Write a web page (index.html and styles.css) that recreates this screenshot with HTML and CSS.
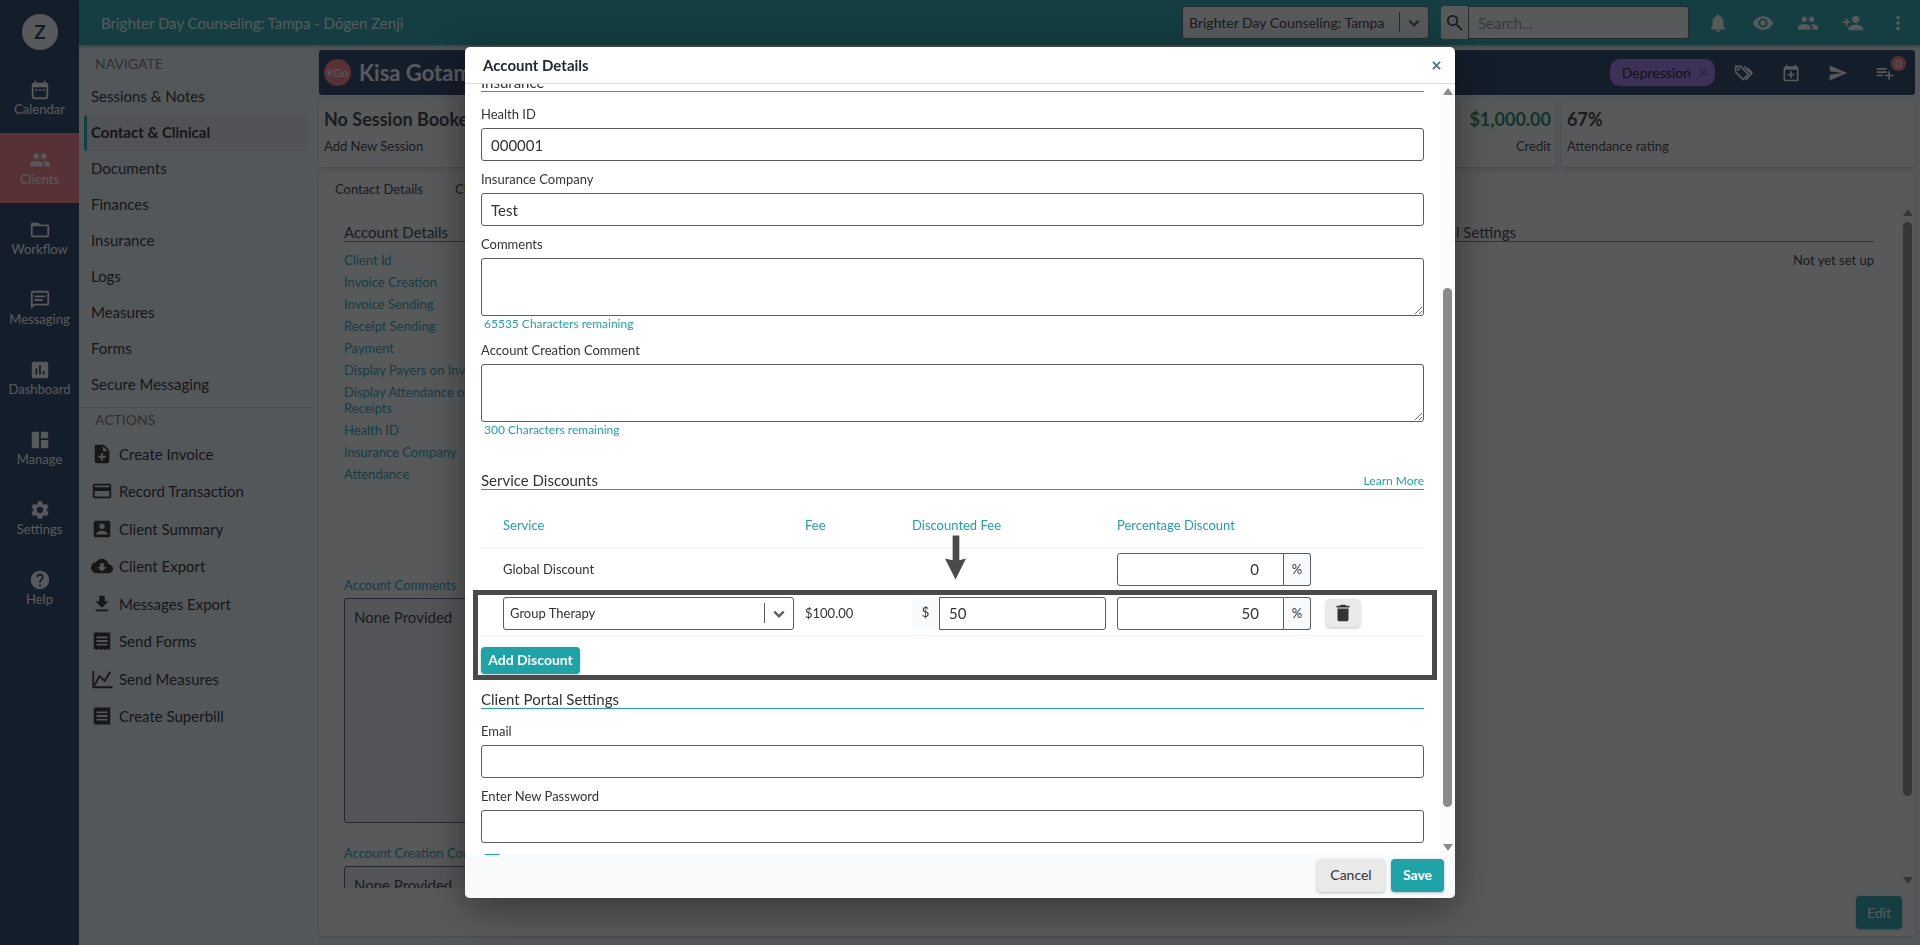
FILE: index.html
```
<!DOCTYPE html>
<html lang="en">
<head>
    <meta charset="UTF-8">
    <meta name="viewport" content="width=device-width, initial-scale=1.0">
    <title>Brighter Day Counseling - Account Details</title>
    <link rel="stylesheet" href="styles.css">
</head>
<body>
    <div class="app">
        <nav class="rail">
            <a class="logo" href="#">Z</a>
            <a class="rail-item" href="#">
                <svg class="icon" viewBox="0 0 24 24"><path d="M9 11H7v2h2v-2zm4 0h-2v2h2v-2zm4 0h-2v2h2v-2zm2-7h-1V2h-2v2H8V2H6v2H5c-1.11 0-1.99.9-1.99 2L3 20c0 1.1.89 2 2 2h14c1.1 0 2-.9 2-2V6c0-1.1-.9-2-2-2zm0 16H5V9h14v11z"/></svg>
                Calendar
            </a>
            <a class="rail-item active" href="#">
                <svg class="icon" viewBox="0 0 24 24"><path d="M16 11c1.66 0 2.99-1.34 2.99-3S17.66 5 16 5c-1.66 0-3 1.34-3 3s1.34 3 3 3zm-8 0c1.66 0 2.99-1.34 2.99-3S9.66 5 8 5C6.34 5 5 6.34 5 8s1.34 3 3 3zm0 2c-2.33 0-7 1.17-7 3.5V19h14v-2.5c0-2.33-4.67-3.5-7-3.5zm8 0c-.29 0-.62.02-.97.05 1.16.84 1.97 1.97 1.97 3.45V19h6v-2.5c0-2.33-4.67-3.5-7-3.5z"/></svg>
                Clients
            </a>
            <a class="rail-item" href="#">
                <svg class="icon" viewBox="0 0 24 24"><path d="M20 6h-8l-2-2H4c-1.1 0-1.99.9-1.99 2L2 18c0 1.1.9 2 2 2h16c1.1 0 2-.9 2-2V8c0-1.1-.9-2-2-2zm0 12H4V8h16v10z"/></svg>
                Workflow
            </a>
            <a class="rail-item" href="#">
                <svg class="icon" viewBox="0 0 24 24"><path d="M4 4h16v12H5.17L4 17.17V4m0-2c-1.1 0-1.99.9-1.99 2L2 22l4-4h14c1.1 0 2-.9 2-2V4c0-1.1-.9-2-2-2H4zm2 9h9v2H6v-2zm0-4h12v2H6V7z"/></svg>
                Messaging
            </a>
            <a class="rail-item" href="#">
                <svg class="icon" viewBox="0 0 24 24"><path d="M19 3H5c-1.1 0-2 .9-2 2v14c0 1.1.9 2 2 2h14c1.1 0 2-.9 2-2V5c0-1.1-.9-2-2-2zM9 17H7v-7h2v7zm4 0h-2V7h2v10zm4 0h-2v-4h2v4z"/></svg>
                Dashboard
            </a>
            <a class="rail-item" href="#">
                <svg class="icon" viewBox="0 0 24 24"><path d="M11 21H5c-1.1 0-2-.9-2-2V5c0-1.1.9-2 2-2h6v18zm2 0h6c1.1 0 2-.9 2-2v-7h-8v9zm8-11V5c0-1.1-.9-2-2-2h-6v7h8z"/></svg>
                Manage
            </a>
            <a class="rail-item" href="#">
                <svg class="icon" viewBox="0 0 24 24"><path d="M19.14 12.94c.04-.3.06-.61.06-.94 0-.32-.02-.64-.07-.94l2.03-1.58c.18-.14.23-.41.12-.61l-1.92-3.32c-.12-.22-.37-.29-.59-.22l-2.39.96c-.5-.38-1.03-.7-1.62-.94l-.36-2.54c-.04-.24-.24-.41-.48-.41h-3.84c-.24 0-.43.17-.47.41l-.36 2.54c-.59.24-1.13.57-1.62.94l-2.39-.96c-.22-.08-.47 0-.59.22L2.74 8.87c-.12.21-.08.47.12.61l2.03 1.58c-.05.3-.09.63-.09.94s.02.64.07.94l-2.03 1.58c-.18.14-.23.41-.12.61l1.92 3.32c.12.22.37.29.59.22l2.39-.96c.5.38 1.03.7 1.62.94l.36 2.54c.05.24.24.41.48.41h3.84c.24 0 .44-.17.47-.41l.36-2.54c.59-.24 1.13-.56 1.62-.94l2.39.96c.22.08.47 0 .59-.22l1.92-3.32c.12-.22.07-.47-.12-.61l-2.01-1.58zM12 15.6c-1.98 0-3.6-1.62-3.6-3.6s1.62-3.6 3.6-3.6 3.6 1.62 3.6 3.6-1.62 3.6-3.6 3.6z"/></svg>
                Settings
            </a>
            <a class="rail-item" href="#">
                <svg class="icon" viewBox="0 0 24 24"><path d="M12 2C6.48 2 2 6.48 2 12s4.48 10 10 10 10-4.48 10-10S17.52 2 12 2zm1 17h-2v-2h2v2zm2.07-7.75l-.9.92C13.45 12.9 13 13.5 13 15h-2v-.5c0-1.1.45-2.1 1.17-2.83l1.24-1.26c.37-.36.59-.86.59-1.41 0-1.1-.9-2-2-2s-2 .9-2 2H8c0-2.21 1.79-4 4-4s4 1.79 4 4c0 .88-.36 1.68-.93 2.25z"/></svg>
                Help
            </a>
        </nav>

        <div class="page">
            <header class="topbar">
                <h1 class="topbar-title">Brighter Day Counseling: Tampa - Dōgen Zenji</h1>
                <div class="select-wrap location">
                    <select aria-label="Location">
                        <option>Brighter Day Counseling: Tampa</option>
                    </select>
                    <svg class="chevron" viewBox="0 0 12 12"><path d="M2 4l4 4 4-4"/></svg>
                </div>
                <div class="search">
                    <button type="button" class="search-btn" aria-label="Search">
                        <svg viewBox="0 0 18 18"><circle cx="7" cy="7" r="5"/><path d="M11 11l6 6"/></svg>
                    </button>
                    <input type="text" placeholder="Search..." aria-label="Search clients">
                </div>
                <div class="topbar-icons">
                    <button type="button" class="icon-btn" aria-label="Notifications"><svg class="icon" viewBox="0 0 24 24"><path d="M12 22c1.1 0 2-.9 2-2h-4c0 1.1.89 2 2 2zm6-6v-5c0-3.07-1.64-5.64-4.5-6.32V4c0-.83-.67-1.5-1.5-1.5s-1.5.67-1.5 1.5v.68C7.63 5.36 6 7.92 6 11v5l-2 2v1h16v-1l-2-2z"/></svg></button>
                    <button type="button" class="icon-btn" aria-label="Recently viewed"><svg class="icon" viewBox="0 0 24 24"><path d="M12 4.5C7 4.5 2.73 7.61 1 12c1.73 4.39 6 7.5 11 7.5s9.27-3.11 11-7.5c-1.73-4.39-6-7.5-11-7.5zM12 17c-2.76 0-5-2.24-5-5s2.24-5 5-5 5 2.24 5 5-2.24 5-5 5zm0-8c-1.66 0-3 1.34-3 3s1.34 3 3 3 3-1.34 3-3-1.34-3-3-3z"/></svg></button>
                    <button type="button" class="icon-btn" aria-label="Clients"><svg class="icon" viewBox="0 0 24 24"><path d="M16 11c1.66 0 2.99-1.34 2.99-3S17.66 5 16 5c-1.66 0-3 1.34-3 3s1.34 3 3 3zm-8 0c1.66 0 2.99-1.34 2.99-3S9.66 5 8 5C6.34 5 5 6.34 5 8s1.34 3 3 3zm0 2c-2.33 0-7 1.17-7 3.5V19h14v-2.5c0-2.33-4.67-3.5-7-3.5zm8 0c-.29 0-.62.02-.97.05 1.16.84 1.97 1.97 1.97 3.45V19h6v-2.5c0-2.33-4.67-3.5-7-3.5z"/></svg></button>
                    <button type="button" class="icon-btn" aria-label="Add client"><svg class="icon" viewBox="0 0 24 24"><path d="M15 12c2.21 0 4-1.79 4-4s-1.79-4-4-4-4 1.79-4 4 1.79 4 4 4zm-9-2V7H4v3H1v2h3v3h2v-3h3v-2H6zm9 4c-2.67 0-8 1.34-8 4v2h16v-2c0-2.66-5.33-4-8-4z"/></svg></button>
                    <button type="button" class="icon-btn" aria-label="More"><svg class="icon" viewBox="0 0 24 24"><path d="M12 8c1.1 0 2-.9 2-2s-.9-2-2-2-2 .9-2 2 .9 2 2 2zm0 2c-1.1 0-2 .9-2 2s.9 2 2 2 2-.9 2-2-.9-2-2-2zm0 6c-1.1 0-2 .9-2 2s.9 2 2 2 2-.9 2-2-.9-2-2-2z"/></svg></button>
                </div>
            </header>

            <div class="content">
                <aside class="side">
                    <h2 class="side-title">NAVIGATE</h2>
                    <a class="side-link" href="#">Sessions &amp; Notes</a>
                    <a class="side-link active" href="#">Contact &amp; Clinical</a>
                    <a class="side-link" href="#">Documents</a>
                    <a class="side-link" href="#">Finances</a>
                    <a class="side-link" href="#">Insurance</a>
                    <a class="side-link" href="#">Logs</a>
                    <a class="side-link" href="#">Measures</a>
                    <a class="side-link" href="#">Forms</a>
                    <a class="side-link" href="#">Secure Messaging</a>
                    <h2 class="side-title actions-title">ACTIONS</h2>
                    <div class="actions">
                        <a class="action" href="#"><svg class="icon" viewBox="0 0 24 24"><path d="M14 2H6c-1.1 0-1.99.9-1.99 2L4 20c0 1.1.89 2 1.99 2H18c1.1 0 2-.9 2-2V8l-6-6zm2 14h-3v3h-2v-3H8v-2h3v-3h2v3h3v2zm-3-7V3.5L18.5 9H13z"/></svg>Create Invoice</a>
                        <a class="action" href="#"><svg class="icon" viewBox="0 0 24 24"><path d="M20 4H4c-1.11 0-1.99.89-1.99 2L2 18c0 1.11.89 2 2 2h16c1.11 0 2-.89 2-2V6c0-1.11-.89-2-2-2zm0 14H4v-6h16v6zm0-10H4V6h16v2z"/></svg>Record Transaction</a>
                        <a class="action" href="#"><svg class="icon" viewBox="0 0 24 24"><path d="M3 5v14c0 1.1.89 2 2 2h14c1.1 0 2-.9 2-2V5c0-1.1-.9-2-2-2H5c-1.11 0-2 .9-2 2zm12 4c0 1.66-1.34 3-3 3s-3-1.34-3-3 1.34-3 3-3 3 1.34 3 3zm-9 8c0-2 4-3.1 6-3.1s6 1.1 6 3.1v1H6v-1z"/></svg>Client Summary</a>
                        <a class="action" href="#"><svg class="icon" viewBox="0 0 24 24"><path d="M19.35 10.04C18.67 6.59 15.64 4 12 4 9.11 4 6.6 5.64 5.35 8.04 2.34 8.36 0 10.91 0 14c0 3.31 2.69 6 6 6h13c2.76 0 5-2.24 5-5 0-2.64-2.05-4.78-4.65-4.96zM17 13l-5 5-5-5h3V9h4v4h3z"/></svg>Client Export</a>
                        <a class="action" href="#"><svg class="icon" viewBox="0 0 24 24"><path d="M19 9h-4V3H9v6H5l7 7 7-7zM5 18v2h14v-2H5z"/></svg>Messages Export</a>
                        <a class="action" href="#"><svg class="icon" viewBox="0 0 24 24"><path d="M18 17H6v-2h12v2zm0-4H6v-2h12v2zm0-4H6V7h12v2zM3 22l1.5-1.5L6 22l1.5-1.5L9 22l1.5-1.5L12 22l1.5-1.5L15 22l1.5-1.5L18 22l1.5-1.5L21 22V2l-1.5 1.5L18 2l-1.5 1.5L15 2l-1.5 1.5L12 2l-1.5 1.5L9 2 7.5 3.5 6 2 4.5 3.5 3 2v20z"/></svg>Send Forms</a>
                        <a class="action" href="#"><svg class="icon" viewBox="0 0 24 24"><path d="M2.5 3v18h21M4 19l5-10 6 5 6-10" fill="none" stroke="currentColor" stroke-width="2"/></svg>Send Measures</a>
                        <a class="action" href="#"><svg class="icon" viewBox="0 0 24 24"><path d="M18 17H6v-2h12v2zm0-4H6v-2h12v2zm0-4H6V7h12v2zM3 22l1.5-1.5L6 22l1.5-1.5L9 22l1.5-1.5L12 22l1.5-1.5L15 22l1.5-1.5L18 22l1.5-1.5L21 22V2l-1.5 1.5L18 2l-1.5 1.5L15 2l-1.5 1.5L12 2l-1.5 1.5L9 2 7.5 3.5 6 2 4.5 3.5 3 2v20z"/></svg>Create Superbill</a>
                    </div>
                </aside>

                <main class="main">
                    <div class="client-bar">
                        <span class="avatar">KGo</span>
                        <h2 class="client-name">Kisa Gotami</h2>
                        <span class="tag">Depression <button type="button" class="tag-remove" aria-label="Remove tag"><svg viewBox="0 0 10 10"><path d="M1 1l8 8M9 1l-8 8"/></svg></button></span>
                        <div class="client-icons">
                            <button type="button" class="icon-btn" aria-label="Tags"><svg class="icon" viewBox="0 0 24 24"><path d="M2 4v7l9 9 6-6.5L8 4zM12 4l9 9-7 7.5M16 6l6 6" fill="none" stroke="currentColor" stroke-width="2"/><circle cx="5.5" cy="7.5" r="1.5"/></svg></button>
                            <button type="button" class="icon-btn" aria-label="Add appointment"><svg class="icon" viewBox="0 0 24 24"><path d="M19 4h-1V2h-2v2H8V2H6v2H5c-1.11 0-2 .9-2 2v14c0 1.1.89 2 2 2h14c1.1 0 2-.9 2-2V6c0-1.1-.9-2-2-2zm0 16H5V8h14v12zM11 10h2v3h3v2h-3v3h-2v-3H8v-2h3z"/></svg></button>
                            <button type="button" class="icon-btn" aria-label="Send"><svg class="icon" viewBox="0 0 24 24"><path d="M2.01 21L23 12 2.01 3 2 10l15 2-15 2z"/></svg></button>
                            <button type="button" class="icon-btn" aria-label="Tasks"><svg class="icon" viewBox="0 0 24 24"><path d="M14 10H2v2h12v-2zm0-4H2v2h12V6zm4 8v-4h-2v4h-4v2h4v4h2v-4h4v-2h-4zM2 16h8v-2H2v2z"/></svg><span class="count">0</span></button>
                        </div>
                    </div>

                    <div class="stats">
                        <div class="stat stat-session">
                            <strong>No Session Booked</strong>
                            <a href="#">Add New Session</a>
                        </div>
                        <div class="stat stat-credit">
                            <strong>$1,000.00</strong>
                            <span>Credit</span>
                        </div>
                        <div class="stat">
                            <strong>67%</strong>
                            <span>Attendance rating</span>
                        </div>
                    </div>

                    <div class="panel">
                        <div class="panel-tabs">
                            <a href="#">Contact Details</a>
                            <a href="#">Clinical</a>
                        </div>
                        <div class="panel-scroll">
                            <div class="panel-body">
                                <section class="account">
                                    <h3 class="section-title">Account Details</h3>
                                    <ul class="fields">
                                        <li>Client Id</li>
                                        <li>Invoice Creation</li>
                                        <li>Invoice Sending</li>
                                        <li>Receipt Sending</li>
                                        <li>Payment</li>
                                        <li>Display Payers on Invoice</li>
                                        <li>Display Attendance on Receipts</li>
                                        <li>Health ID</li>
                                        <li>Insurance Company</li>
                                        <li>Attendance</li>
                                    </ul>
                                    <label class="field-label" for="accountComments">Account Comments</label>
                                    <textarea class="read-only" id="accountComments" readonly>None Provided</textarea>
                                    <label class="field-label" for="accountCreation">Account Creation Comment</label>
                                    <textarea class="read-only" id="accountCreation" readonly>None Provided</textarea>
                                </section>
                                <section class="portal">
                                    <h3 class="section-title">Client Portal Settings</h3>
                                    <p class="not-set">Not yet set up</p>
                                </section>
                            </div>
                            <div class="scrollbar">
                                <span class="arrow-up"></span>
                                <span class="thumb panel-thumb"></span>
                                <span class="arrow-down"></span>
                            </div>
                        </div>
                        <div class="panel-footer">
                            <button type="button" class="btn btn-primary btn-edit">Edit</button>
                        </div>
                    </div>
                </main>
            </div>
        </div>
    </div>

    <div class="overlay">
        <div class="modal" role="dialog" aria-labelledby="modalTitle">
            <div class="modal-header">
                <h2 id="modalTitle">Account Details</h2>
                <button type="button" class="close" aria-label="Close"><svg viewBox="0 0 10 10"><path d="M1 1l8 8M9 1l-8 8"/></svg></button>
            </div>
            <div class="modal-body">
                <form class="modal-form" id="accountForm">
                    <h3 class="section-title first">Insurance</h3>
                    <div class="form-group">
                        <label for="healthId">Health ID</label>
                        <input type="text" id="healthId" value="000001">
                    </div>
                    <div class="form-group">
                        <label for="company">Insurance Company</label>
                        <input type="text" id="company" value="Test">
                    </div>
                    <div class="form-group">
                        <label for="comments">Comments</label>
                        <textarea id="comments"></textarea>
                        <span class="remaining">65535 Characters remaining</span>
                    </div>
                    <div class="form-group">
                        <label for="creationComment">Account Creation Comment</label>
                        <textarea id="creationComment"></textarea>
                        <span class="remaining">300 Characters remaining</span>
                    </div>

                    <div class="discounts">
                        <h3 class="section-title">Service Discounts <a href="#">Learn More</a></h3>
                        <table>
                            <thead>
                                <tr>
                                    <th class="col-service">Service</th>
                                    <th class="col-fee">Fee</th>
                                    <th class="col-discounted">Discounted Fee</th>
                                    <th class="col-percent">Percentage Discount</th>
                                    <th></th>
                                </tr>
                            </thead>
                            <tbody>
                                <tr>
                                    <td>Global Discount</td>
                                    <td></td>
                                    <td></td>
                                    <td>
                                        <div class="input-group percent">
                                            <input type="text" value="0" aria-label="Global percentage discount">
                                            <span>%</span>
                                        </div>
                                    </td>
                                    <td></td>
                                </tr>
                                <tr>
                                    <td>
                                        <div class="select-wrap">
                                            <select aria-label="Service">
                                                <option>Group Therapy</option>
                                            </select>
                                            <svg class="chevron" viewBox="0 0 12 12"><path d="M2 4l4 4 4-4"/></svg>
                                        </div>
                                    </td>
                                    <td>$100.00</td>
                                    <td>
                                        <div class="input-group money">
                                            <span>$</span>
                                            <input type="text" value="50" aria-label="Discounted fee">
                                        </div>
                                    </td>
                                    <td>
                                        <div class="input-group percent">
                                            <input type="text" value="50" aria-label="Percentage discount">
                                            <span>%</span>
                                        </div>
                                    </td>
                                    <td><button type="button" class="btn btn-delete" aria-label="Delete discount"><svg class="icon" viewBox="0 0 24 24"><path d="M6 19c0 1.1.9 2 2 2h8c1.1 0 2-.9 2-2V7H6v12zM19 4h-3.5l-1-1h-5l-1 1H5v2h14V4z"/></svg></button></td>
                                </tr>
                            </tbody>
                        </table>
                        <button type="button" class="btn btn-primary btn-add">Add Discount</button>
                        <svg class="pointer" viewBox="0 0 22 46"><path d="M8 0h7v26l7-2-11 22L0 24l8 2z"/></svg>
                        <div class="highlight"></div>
                    </div>

                    <h3 class="section-title">Client Portal Settings</h3>
                    <div class="form-group">
                        <label for="email">Email</label>
                        <input type="email" id="email">
                    </div>
                    <div class="form-group">
                        <label for="password">Enter New Password</label>
                        <input type="password" id="password">
                    </div>
                    <input type="checkbox" class="check" aria-label="Show password">
                </form>
                <div class="scrollbar">
                    <span class="arrow-up"></span>
                    <span class="thumb modal-thumb"></span>
                    <span class="arrow-down"></span>
                </div>
            </div>
            <div class="modal-footer">
                <button type="button" class="btn btn-cancel">Cancel</button>
                <button type="submit" form="accountForm" class="btn btn-primary btn-save">Save</button>
            </div>
        </div>
    </div>
</body>
</html>
```
FILE: styles.css
```
* {
    margin: 0;
    padding: 0;
    box-sizing: border-box;
}

body, input, select, textarea, button {
    font-family: Lato, "Open Sans", sans-serif;
    font-size: 13px;
    line-height: 16px;
    color: #333;
}

a {
    color: inherit;
    text-decoration: none;
}

button {
    border: none;
    background: none;
    cursor: pointer;
}

.icon {
    width: 22px;
    height: 22px;
    fill: currentColor;
    flex: none;
}

.app {
    display: flex;
    height: 100vh;
    overflow: hidden;
    background: #f6f7fb;
}

/* left icon rail */
.rail {
    width: 79px;
    flex: none;
    display: flex;
    flex-direction: column;
    background: #20375c;
}

.logo {
    width: 36px;
    height: 36px;
    margin: 14px auto 13px 22px;
    border-radius: 50%;
    background: #fff;
    color: #20375c;
    font-size: 19px;
    font-weight: bold;
    line-height: 36px;
    text-align: center;
}

.rail-item {
    height: 70px;
    display: flex;
    flex-direction: column;
    align-items: center;
    justify-content: center;
    color: #fff;
}

.rail-item.active {
    background: #ff7a80;
}

.page {
    flex: 1;
    min-width: 0;
    display: flex;
    flex-direction: column;
}

/* top bar */
.topbar {
    height: 45px;
    flex: none;
    display: flex;
    align-items: center;
    padding-left: 22px;
    background: #1ea3a9;
    box-shadow: 0 1px 4px rgba(0, 0, 0, 0.4);
}

.topbar-title {
    flex: 1;
    color: #fff;
    font-size: 15px;
    font-weight: normal;
}

.select-wrap {
    position: relative;
}

.select-wrap select {
    width: 100%;
    height: 33px;
    padding: 0 36px 0 6px;
    border: 1px solid #575b6b;
    border-radius: 3px;
    background: #fff;
    appearance: none;
}

.select-wrap::after {
    content: "";
    position: absolute;
    top: 6px;
    right: 29px;
    width: 1px;
    height: 20px;
    background: #575b6b;
}

.chevron {
    position: absolute;
    top: 10px;
    right: 8px;
    width: 14px;
    height: 14px;
    fill: none;
    stroke: #575b6b;
    stroke-width: 2;
}

.location {
    width: 247px;
    margin-right: 12px;
}

.location select {
    font-size: 14px;
    padding-right: 29px;
}

.search {
    display: flex;
    width: 248px;
    height: 33px;
    margin-right: 6px;
}

.search-btn {
    width: 27px;
    background: #fff;
    border-radius: 3px 0 0 3px;
}

.search-btn svg {
    width: 17px;
    height: 17px;
    fill: none;
    stroke: #333;
    stroke-width: 2;
    display: block;
    margin: auto;
}

.search input {
    flex: 1;
    min-width: 0;
    padding: 0 9px;
    border: 1px solid #575b6b;
    border-radius: 0 3px 3px 0;
    font-size: 15px;
}

.search input::placeholder {
    color: #999;
}

.topbar-icons, .client-icons {
    display: flex;
}

.icon-btn {
    position: relative;
    width: 45px;
    display: flex;
    justify-content: center;
    color: #fff;
}

.content {
    flex: 1;
    min-height: 0;
    display: flex;
}

/* navigation column */
.side {
    width: 240px;
    flex: none;
    padding-top: 8px;
    border-right: 1px solid #eef0f4;
}

.side-title {
    padding-left: 16px;
    font-size: 14px;
    font-weight: normal;
    line-height: 21px;
    color: #777;
    margin-bottom: 5px;
}

.side-link {
    display: block;
    height: 36px;
    margin: 0 10px 0 5px;
    padding-left: 7px;
    font-size: 15px;
    line-height: 34px;
    color: #222;
}

.side-link.active {
    padding-left: 4px;
    border-left: 3px solid #1ea3a9;
    border-radius: 3px;
    background: #e9ebf0;
    font-weight: bold;
}

.actions-title {
    margin: 4px 6px 0 0;
    padding-top: 1px;
    border-top: 1px solid #d5d8de;
}

.actions {
    display: grid;
    grid-auto-rows: 1fr;
    height: 300px;
    margin-top: 5px;
}

.action {
    display: flex;
    align-items: center;
    gap: 6px;
    padding-left: 12px;
    font-size: 15px;
    color: #222;
}

/* client area */
.main {
    flex: 1;
    min-width: 0;
    display: flex;
    flex-direction: column;
    gap: 6px;
    padding: 5px 5px 9px 0;
}

.client-bar {
    height: 45px;
    flex: none;
    display: flex;
    align-items: center;
    padding: 0 7px 0 5px;
    border-radius: 3px;
    background: #20375c;
}

.avatar {
    width: 27px;
    height: 27px;
    border-radius: 50%;
    background: #ff7a80;
    color: #fff;
    font-size: 11px;
    line-height: 27px;
    text-align: center;
}

.client-name {
    flex: 1;
    padding-left: 8px;
    color: #fff;
    font-size: 22px;
    line-height: 28px;
}

.tag {
    display: flex;
    align-items: center;
    gap: 8px;
    height: 27px;
    margin-right: 5px;
    padding: 0 7px 0 12px;
    border-radius: 10px;
    background: #ac79f2;
    font-size: 14px;
    color: #111;
}

.tag-remove svg, .close svg {
    display: block;
    width: 9px;
    height: 9px;
    stroke: #111;
    stroke-width: 1;
}

.client-icons .icon-btn {
    width: 47px;
}

.client-icons .icon {
    width: 20px;
    height: 20px;
}

.count {
    position: absolute;
    top: -7px;
    right: 2px;
    width: 15px;
    height: 15px;
    border-radius: 50%;
    background: #ff7a80;
    font-size: 11px;
    line-height: 15px;
    color: #fff;
}

.stats {
    display: grid;
    grid-template-columns: 353fr 878fr 353fr;
    gap: 6px;
}

.stat {
    height: 66px;
    display: flex;
    flex-direction: column;
    gap: 8px;
    padding: 7px 5px;
    border-radius: 3px;
    background: #fff;
    box-shadow: 0 1px 3px rgba(0, 0, 0, 0.2);
}

.stat strong {
    font-size: 18px;
    line-height: 22px;
}

.stat-credit {
    align-items: flex-end;
}

.stat-credit strong {
    color: #0a8a50;
}

.panel {
    flex: 1;
    min-height: 0;
    display: flex;
    flex-direction: column;
    border-radius: 3px;
    background: #fff;
    box-shadow: 0 1px 3px rgba(0, 0, 0, 0.2);
}

.panel-tabs {
    display: flex;
    gap: 32px;
    height: 32px;
    padding: 8px 16px;
}

.panel-scroll {
    flex: 1;
    min-height: 0;
    display: flex;
    overflow: hidden;
}

.panel-body {
    flex: 1;
    display: grid;
    grid-template-columns: repeat(3, 1fr);
    gap: 21px;
    padding: 18px 26px 0 25px;
}

.portal {
    grid-column: 3;
}

.section-title {
    display: flex;
    justify-content: space-between;
    align-items: flex-end;
    border-bottom: 1px solid #1ea3a9;
    font-size: 15px;
    font-weight: normal;
    line-height: 18px;
}

.fields {
    height: 335px;
    padding-top: 10px;
    list-style: none;
    color: #1ea3a9;
}

.fields li {
    width: 152px;
    padding-bottom: 6px;
}

.field-label {
    display: block;
    padding-bottom: 5px;
    color: #1ea3a9;
}

.read-only {
    display: block;
    width: 100%;
    height: 225px;
    margin-bottom: 22px;
    padding: 10px 9px;
    border: 1px solid #575b6b;
    border-radius: 3px;
    background: #f1f2f4;
    font-size: 15px;
    resize: none;
}

.not-set {
    padding-top: 10px;
    text-align: right;
}

.panel-footer {
    height: 48px;
    display: flex;
    justify-content: flex-end;
    align-items: flex-start;
    padding: 8px 13px;
}

/* scrollbars */
.scrollbar {
    width: 15px;
    flex: none;
    display: flex;
    flex-direction: column;
    align-items: center;
    padding: 4px 0;
    background: #fcfcfc;
}

.arrow-up, .arrow-down {
    border: 5px solid transparent;
}

.arrow-up {
    border-top: none;
    border-bottom: 7px solid #8b8b8b;
}

.arrow-down {
    margin-top: auto;
    border-bottom: none;
    border-top: 7px solid #8b8b8b;
}

.thumb {
    width: 9px;
    border-radius: 5px;
    background: #8b8b8b;
}

.panel-thumb {
    height: 85%;
    margin-top: 6px;
}

.modal-thumb {
    height: 68%;
    margin-top: 193px;
}

/* buttons */
.btn {
    height: 33px;
    border-radius: 4px;
    box-shadow: 0 1px 3px rgba(0, 0, 0, 0.25);
    font-size: 14px;
}

.btn-primary {
    background: #1ea3a9;
    color: #fff;
    font-weight: bold;
}

.btn-edit {
    width: 46px;
    font-weight: normal;
}

.btn-cancel {
    width: 68px;
    background: #eaeaea;
}

.btn-save {
    width: 53px;
}

.btn-add {
    height: 27px;
    width: 99px;
    margin-top: 11px;
}

.btn-delete {
    display: flex;
    align-items: center;
    justify-content: center;
    width: 34px;
    height: 28px;
    background: #eaeaea;
}

/* modal */
.overlay {
    position: fixed;
    inset: 0;
    display: flex;
    align-items: center;
    justify-content: center;
    background: rgba(15, 19, 22, 0.7);
}

.modal {
    width: 990px;
    height: 90vh;
    max-width: 95vw;
    display: flex;
    flex-direction: column;
    border-radius: 5px;
    background: #fff;
    box-shadow: 0 10px 40px rgba(0, 0, 0, 0.4);
    overflow: hidden;
}

.modal-header {
    height: 37px;
    flex: none;
    display: flex;
    align-items: center;
    justify-content: space-between;
    padding: 0 14px 0 18px;
    border-bottom: 1px solid #dcdcdc;
}

.modal-header h2 {
    font-size: 15px;
    line-height: 20px;
    color: #222b33;
}

.close svg {
    stroke: #55708a;
    stroke-width: 2;
}

.modal-body {
    flex: 1;
    min-height: 0;
    display: flex;
    overflow: hidden;
}

.modal-form {
    flex: 1;
    height: 100%;
    padding: 0 16px;
    overflow: hidden;
}

.section-title.first {
    margin-top: -11px;
}

.section-title a {
    font-size: 12px;
    line-height: 16px;
    color: #1ea3a9;
}

.form-group {
    padding-top: 14px;
}

.form-group label {
    display: block;
    margin-bottom: 6px;
}

.form-group input, .form-group textarea {
    display: block;
    width: 100%;
    height: 33px;
    padding: 0 9px;
    border: 1px solid #575b6b;
    border-radius: 3px;
    font-size: 15px;
    outline: none;
}

.form-group + .form-group {
    padding-top: 10px;
}

.form-group textarea {
    height: 58px;
    resize: vertical;
}

.remaining {
    display: block;
    padding-left: 3px;
    font-size: 12px;
    color: #1ea3a9;
}

.discounts {
    position: relative;
    padding-top: 33px;
    margin-bottom: 16px;
}

table {
    width: 100%;
    table-layout: fixed;
    border-collapse: collapse;
}

th {
    height: 57px;
    padding-top: 13px;
    text-align: left;
    font-weight: normal;
    color: #1ea3a9;
    border-bottom: 1px solid #f4f5f7;
}

td {
    height: 44px;
    border-bottom: 1px solid #f4f5f7;
}

th:first-child, td:first-child {
    padding-left: 22px;
}

.col-service {
    width: 324px;
}

.col-fee {
    width: 107px;
}

.col-discounted {
    width: 205px;
}

.col-percent {
    width: 209px;
}

td .select-wrap {
    width: 291px;
}

.input-group {
    display: flex;
    width: 194px;
    height: 33px;
}

.input-group input {
    flex: 1;
    min-width: 0;
    padding: 0 9px;
    border: 1px solid #575b6b;
    font-size: 15px;
}

.input-group span {
    width: 27px;
    line-height: 31px;
    text-align: center;
    background: #f8fafc;
}

.money input {
    border-radius: 0 3px 3px 0;
}

.percent input {
    padding-right: 24px;
    border-radius: 3px 0 0 3px;
    text-align: right;
}

.percent span {
    border: 1px solid #575b6b;
    border-left: none;
    border-radius: 0 3px 3px 0;
}

/* callout over the discount row */
.pointer {
    position: absolute;
    top: 97px;
    left: 464px;
    width: 21px;
    height: 45px;
    fill: #4a4a4a;
}

.highlight {
    position: absolute;
    left: -8px;
    right: -13px;
    bottom: -6px;
    height: 90px;
    border: 5px solid #4a4a4a;
    pointer-events: none;
}

.check {
    display: block;
    width: 16px;
    height: 16px;
    margin: 11px 3px;
    border: 2px solid #1ea3a9;
    border-radius: 2px;
    appearance: none;
}

.modal-footer {
    height: 43px;
    flex: none;
    display: flex;
    justify-content: flex-end;
    align-items: flex-start;
    gap: 6px;
    padding: 4px 11px;
    background: #f8fafc;
}
```
